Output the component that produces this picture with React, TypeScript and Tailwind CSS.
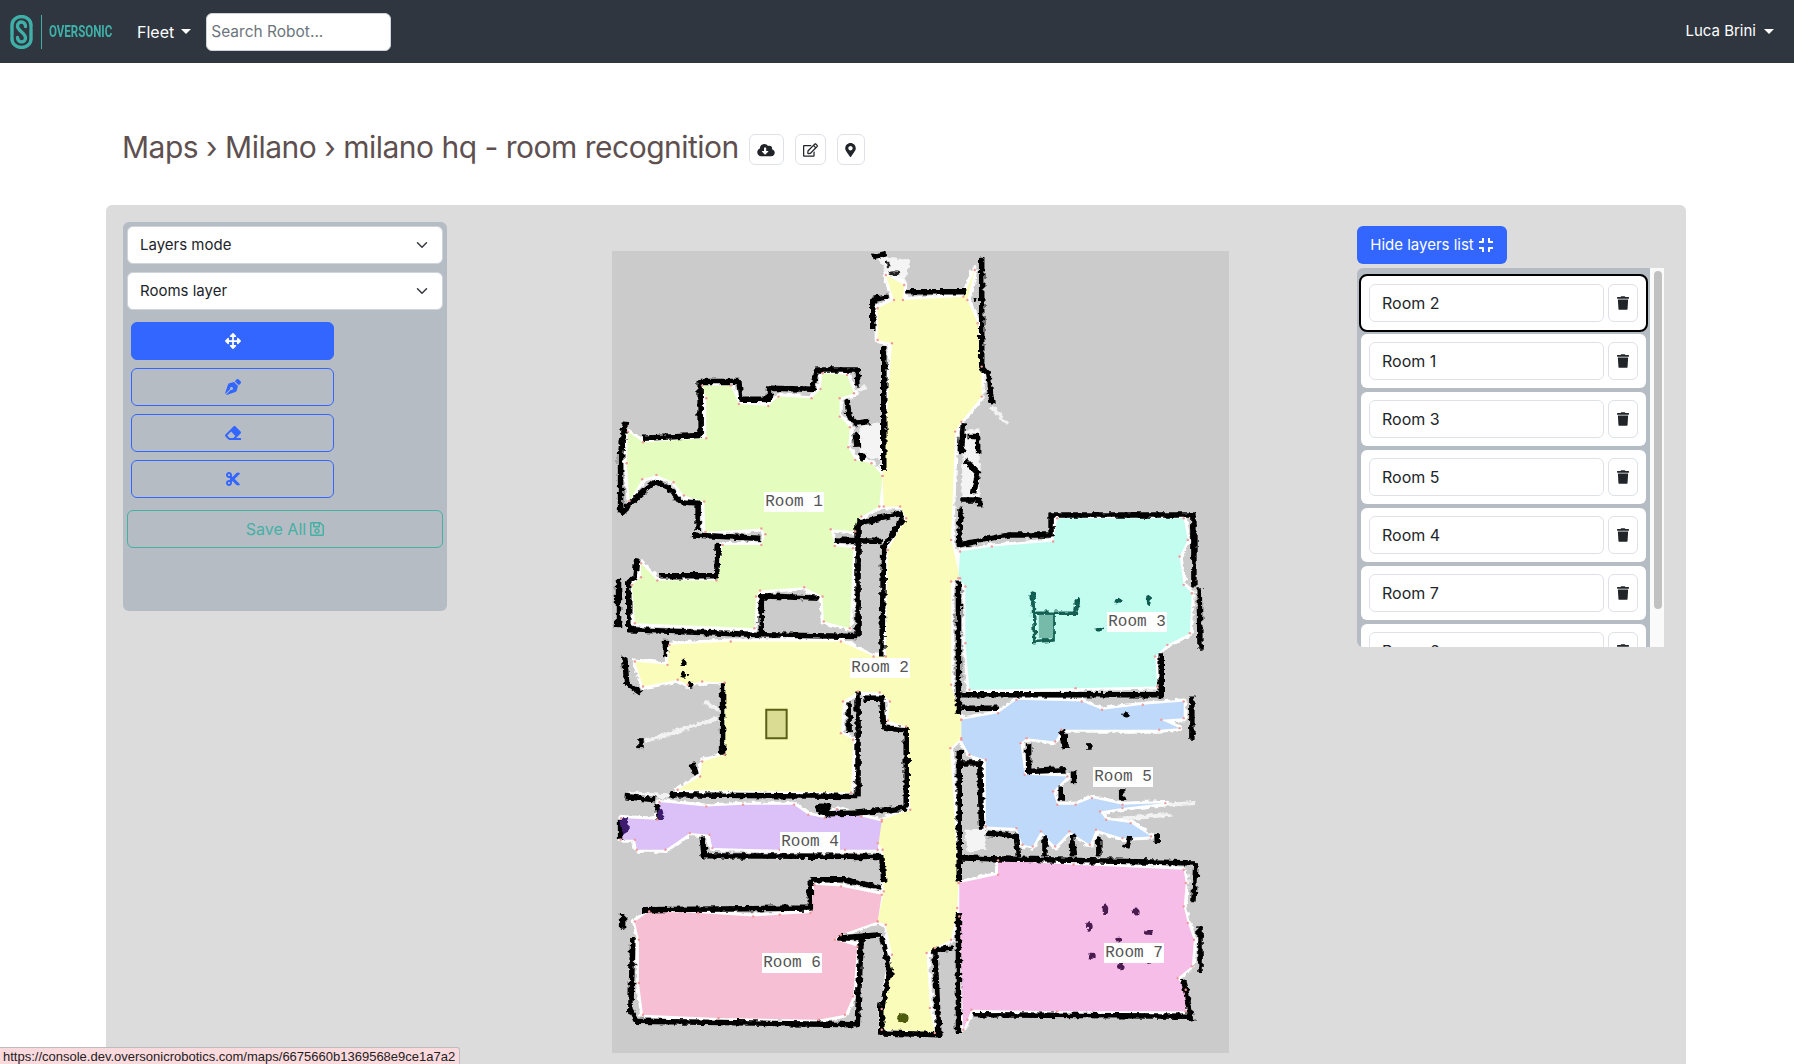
import React from "react";
import { FaArrowsAlt, FaPenNib, FaEraser, FaCut, FaRegSave, FaCompress, FaTrash, FaCloudDownloadAlt, FaRegEdit, FaMapMarkerAlt } from "react-icons/fa";

type P = [number, number][];
const rooms: { fill: string; pts: P }[] = [
  { fill: "#fafdb9", pts: [[700,105],[745,135],[742,180],[890,170],[918,90],[900,180],[925,250],[935,380],[935,470],[885,545],[870,575],[860,900],[882,1015],[860,1025],[860,1335],[885,1440],[885,1495],[858,1525],[878,1930],[875,2005],[860,2100],[820,2125],[800,2140],[808,2305],[820,2380],[690,2370],[690,2308],[715,2145],[700,2055],[680,2045],[695,1955],[692,1830],[680,1810],[690,1740],[760,1710],[750,1460],[705,1442],[710,1385],[685,1358],[632,1355],[595,1385],[590,1480],[620,1500],[615,1658],[190,1650],[245,1610],[250,1565],[305,1545],[305,1328],[250,1325],[215,1335],[190,1320],[105,1340],[85,1265],[165,1275],[170,1215],[320,1205],[590,1205],[670,1250],[700,1250],[705,930],[750,835],[735,800],[695,800],[692,708],[715,310],[680,300],[680,205],[720,180]] },
  { fill: "#e4fdbf", pts: [[68,575],[105,607],[260,595],[260,475],[250,437],[320,437],[340,492],[412,498],[437,470],[518,475],[540,447],[545,400],[605,405],[622,460],[587,475],[587,530],[612,562],[608,622],[625,660],[665,670],[692,708],[684,800],[640,830],[625,875],[565,868],[575,918],[620,925],[612,1165],[548,1145],[545,1070],[500,1042],[392,1052],[382,1070],[378,1165],[85,1150],[78,1035],[100,1012],[100,970],[140,1022],[285,1022],[300,915],[395,915],[405,883],[395,866],[258,876],[255,785],[205,767],[180,727],[138,705],[103,718],[72,783],[65,670]] },
  { fill: "#c3fdf0", pts: [[882,935],[960,920],[1110,905],[1120,835],[1430,835],[1440,900],[1420,950],[1430,1035],[1450,1060],[1445,1180],[1390,1215],[1360,1250],[1365,1340],[1165,1345],[905,1350],[895,1210],[895,1040],[878,1015]] },
  { fill: "#bfd9fb", pts: [[885,1440],[975,1420],[1020,1380],[1180,1385],[1230,1410],[1330,1395],[1430,1385],[1430,1435],[1375,1440],[1420,1465],[1370,1470],[1130,1470],[1115,1505],[1045,1495],[1030,1510],[1040,1605],[1145,1610],[1110,1655],[1120,1695],[1165,1695],[1205,1675],[1280,1695],[1385,1690],[1280,1705],[1225,1715],[1240,1740],[1300,1750],[1350,1790],[1280,1795],[1215,1770],[1200,1815],[1150,1775],[1115,1820],[1080,1775],[1060,1820],[1035,1815],[1020,1765],[945,1760],[945,1560],[905,1545],[885,1500]] },
  { fill: "#dcc0f8", pts: [[145,1687],[260,1700],[350,1695],[475,1695],[510,1725],[550,1735],[580,1708],[640,1730],[690,1745],[680,1830],[600,1830],[440,1830],[275,1825],[268,1785],[220,1780],[160,1830],[90,1830],[85,1800],[50,1800],[52,1735],[140,1740]] },
  { fill: "#f7bfd3", pts: [[85,2045],[120,2015],[240,2020],[375,2030],[440,2025],[515,2020],[525,1935],[590,1940],[690,1965],[680,2045],[590,2085],[575,2100],[630,2120],[620,2270],[600,2325],[535,2340],[290,2335],[105,2325],[95,2230],[95,2100]] },
  { fill: "#f6bde8", pts: [[880,1930],[975,1905],[975,1862],[1160,1875],[1430,1890],[1435,1930],[1430,2000],[1440,2050],[1455,2100],[1450,2180],[1415,2215],[1435,2250],[1435,2315],[1120,2315],[910,2310],[900,2340],[890,2370],[880,2030]] },
];

const walls: P[] = [
  [[668,270],[668,178],[705,172]],[[750,155],[895,155]],[[935,50],[935,380],[950,400],[960,490]],[[695,315],[695,690]],
  [[668,50],[700,40]],[[50,820],[50,640],[62,545]],[[105,595],[245,587],[245,425],[340,425],[345,478],[415,478],[415,445],[520,448],[530,390],[630,390],[632,440]],
  [[605,480],[610,530],[632,555]],[[630,585],[630,620]],[[50,820],[110,750],[135,725],[170,745],[195,785],[240,790],[240,870]],
  [[225,885],[390,895]],[[290,912],[285,1008],[145,1008]],[[90,955],[85,1015],[70,1025],[70,1170],[400,1185],[630,1190]],
  [[395,1180],[395,1068],[535,1075]],[[632,1190],[632,850],[735,820],[740,840],[695,920],[690,1250]],[[575,900],[690,905]],[[45,1020],[45,1165]],
  [[890,550],[885,640]],[[885,780],[930,780],[930,800]],[[885,800],[880,915],[1000,885],[1105,885],[1105,825],[1455,825],[1455,1040]],
  [[1468,1045],[1470,1230]],[[1375,1240],[1375,1365],[885,1365]],[[878,1025],[878,1425]],[[885,1405],[975,1405]],
  [[160,1200],[160,1250]],[[300,1330],[300,1545]],[[170,1665],[630,1670]],[[632,1355],[632,1670]],[[645,1375],[690,1375],[695,1465],[750,1470],[750,1700]],[[610,1385],[610,1480]],
  [[250,1790],[255,1848],[690,1850],[695,1930]],[[515,1920],[600,1920],[690,1945]],[[540,1715],[560,1722],[630,1720],[750,1705]],[[50,1740],[50,1800]],[[140,1690],[145,1740]],
  [[515,1920],[515,2005],[105,2010]],[[55,2020],[55,2070]],[[80,2095],[75,2310],[90,2345],[630,2355],[640,2095],[585,2095],[690,2085]],
  [[690,2090],[710,2200],[690,2300],[690,2380],[830,2385],[820,2130],[865,2125]],[[878,2020],[878,2380]],[[915,2325],[1450,2330]],
  [[1460,1870],[1455,1985]],[[1470,2060],[1470,2200]],[[1430,2220],[1450,2345]],[[885,1855],[1460,1870]],
  [[880,1530],[880,1925]],[[880,1570],[930,1570],[935,1770]],[[945,1780],[1020,1790],[1025,1850]],[[1050,1510],[1050,1595],[1140,1590]],
  [[1135,1480],[1140,1525]],[[1160,1595],[1160,1630]],[[1130,1640],[1130,1680]],[[1090,1790],[1090,1850]],[[1155,1785],[1160,1850]],[[1222,1790],[1222,1850]],[[1298,1790],[1290,1825]],
  [[1365,1780],[1365,1810]],[[1450,1370],[1450,1500]],[[1200,1510],[1200,1530]],[[1278,1645],[1278,1680]],
  [[100,1495],[100,1525]],[[225,1570],[235,1605]],[[60,1250],[65,1330],[100,1360]],[[135,1680],[60,1670]],
  [[900,590],[925,590],[925,640]],[[895,660],[925,700],[915,760]],[[625,580],[630,620]],[[660,545],[625,550]],
];

const streaks: P[] = [[[110,1505],[290,1435]],[[255,1385],[290,1410]],[[960,500],[995,550]],[[1240,1705],[1460,1690]],[[1240,1740],[1400,1725]],[[1380,2025],[1425,2015]],[[650,440],[610,470]],[[70,1660],[170,1670]]];

const whitePatches: P[] = [
  [[680,50],[760,60],[745,135],[700,105]],
  [[890,575],[930,565],[930,775],[885,775]],
  [[635,560],[690,545],[690,660],[640,650]],
  [[895,1770],[945,1765],[945,1830],[900,1835]],
  [[1300,1175],[1385,1195],[1360,1215],[1320,1210]],
];

const blobs: [number, number, number, number, string][] = [
  [1238,2010,7,16,"#4a1a50"],[1312,2015,10,12,"#4a1a50"],[1200,2060,7,16,"#4a1a50"],[1345,2078,11,7,"#4a1a50"],[1272,2098,7,7,"#4a1a50"],[1205,2150,9,11,"#4a1a50"],[1277,2182,8,10,"#4a1a50"],[1345,2168,6,5,"#4a1a50"],
  [1268,1082,7,8,"#0e5a50"],[1342,1080,5,14,"#0e5a50"],[1222,1168,8,7,"#0e5a50"],[1170,1090,8,16,"#0e5a50"],[1060,1070,8,16,"#0e5a50"],
  [742,2335,14,14,"#4d5c10"],[60,1760,10,26,"#3c1a70"],[147,1725,8,16,"#3c1a70"],
  [642,650,10,12,"#000"],[205,1268,7,9,"#000"],[205,1305,8,9,"#000"],[222,1335,7,9,"#000"],[1290,1425,8,8,"#000"],[1135,1490,9,22,"#000"],[545,1705,20,14,"#000"],[920,180,4,6,"#000"],[720,100,18,6,"#222"],[705,70,4,12,"#222"],
];

const labels = [
  { t: "Room 1", c: "left-[152px] top-[241px]" },
  { t: "Room 3", c: "left-[495px] top-[361px]" },
  { t: "Room 2", c: "left-[238px] top-[407px]" },
  { t: "Room 5", c: "left-[481px] top-[516px]" },
  { t: "Room 4", c: "left-[168px] top-[581px]" },
  { t: "Room 6", c: "left-[150px] top-[702px]" },
  { t: "Room 7", c: "left-[492px] top-[692px]" },
];

const toStr = (p: P) => p.map((q) => q.join(",")).join(" ");

function MapDrawing() {
  return (
    <svg viewBox="29 33 1512 2407" preserveAspectRatio="none" className="block w-[617px] h-[802px] blur-[0.5px]">
      <defs>
        <filter id="rough" x="-2%" y="-2%" width="104%" height="104%">
          <feTurbulence type="fractalNoise" baseFrequency="0.07" numOctaves="2" seed="4" />
          <feDisplacementMap in="SourceGraphic" scale="16" xChannelSelector="R" yChannelSelector="G" />
        </filter>
      </defs>
      <rect x="29" y="33" width="1512" height="2407" fill="#cbcbcb" />
      <g filter="url(#rough)">
        {streaks.map((s, i) => (
          <polyline key={i} points={toStr(s)} fill="none" stroke="#f2f2f2" strokeWidth="4" vectorEffect="non-scaling-stroke" />
        ))}
        {whitePatches.map((p, i) => (
          <polygon key={i} points={toStr(p)} fill="#f4f4f4" />
        ))}
        {rooms.map((r, i) => (
          <polygon key={i} points={toStr(r.pts)} fill="#ffffff" stroke="#ffffff" strokeWidth="6" vectorEffect="non-scaling-stroke" strokeLinejoin="round" />
        ))}
      </g>
      {rooms.map((r, i) => (
        <polygon key={i} points={toStr(r.pts)} fill={r.fill} />
      ))}
      <g filter="url(#rough)">
        {walls.map((w, i) => (
          <polyline key={i} points={toStr(w)} fill="none" stroke="#000000" strokeWidth="5.5" vectorEffect="non-scaling-stroke" strokeLinejoin="round" />
        ))}
        {blobs.map(([x, y, rx, ry, c], i) => (
          <ellipse key={i} cx={x} cy={y} rx={rx} ry={ry} fill={c} />
        ))}
        <polyline points="1060,1060 1065,1205 1110,1200 1110,1120 1065,1120 1165,1120 1170,1085" fill="none" stroke="#135f53" strokeWidth="3.5" vectorEffect="non-scaling-stroke" />
      </g>
      <rect x="407" y="1410" width="50" height="85" fill="#d9dc92" stroke="#5c5f17" strokeWidth="2" vectorEffect="non-scaling-stroke" />
      <rect x="1075" y="1125" width="35" height="70" fill="#76bba9" />
      {rooms.flatMap((r, i) =>
        r.pts.map((p, j) => <ellipse key={`${i}-${j}`} cx={p[0]} cy={p[1]} rx="3" ry="3.6" fill="#f09a9a" />)
      )}
    </svg>
  );
}

function Chevron() {
  return (
    <svg viewBox="0 0 16 16" className="w-3 h-3" fill="none" stroke="#343a40" strokeWidth="2" strokeLinecap="round" strokeLinejoin="round">
      <path d="M2 5l6 6 6-6" />
    </svg>
  );
}

function Caret() {
  return <span className="inline-block w-0 h-0 border-x-[5px] border-x-transparent border-t-[5px] border-t-white" />;
}

function Logo() {
  return (
    <svg viewBox="0 0 23 34" className="w-[23px] h-[34px]" fill="none" stroke="#3fb0a8" strokeWidth="3.4" strokeLinecap="round">
      <path d="M2 20V10a9.5 8.5 0 0 1 19 0v2" />
      <path d="M21 14v10a9.5 8.5 0 0 1-19 0v-2" />
      <path d="M15.5 11.5c0-6-8-6-8-.5 0 5 8 6.500 8 12 0 5.500-8 5-8-.5" />
    </svg>
  );
}

function Select({ label }: { label: string }) {
  return (
    <div className="h-[38px] bg-white border border-[#ced4da] rounded-md flex items-center justify-between pl-[12px] pr-[14px] text-[15px] text-[#212529]">
      <span className="pt-px">{label}</span>
      <Chevron />
    </div>
  );
}

function ToolButton({ active, children }: { active?: boolean; children: React.ReactNode }) {
  return (
    <div className={active ? "ml-1 w-[203px] h-[38px] rounded-md bg-[#3366ff] border border-[#3366ff] text-white flex items-center justify-center" : "ml-1 w-[203px] h-[38px] rounded-md border border-[#3366ff] text-[#3366ff] flex items-center justify-center"}>
      {children}
    </div>
  );
}

function RoomItem({ name, selected }: { name: string; selected?: boolean }) {
  return (
    <div className={selected ? "shrink-0 h-[54px] bg-white rounded-md flex items-center gap-1 px-2 outline-2 outline-black" : "shrink-0 h-[54px] bg-white rounded-md flex items-center gap-1 px-2"}>
      <div className="w-[235px] h-[38px] border border-[#dee2e6] rounded-md flex items-center pl-[12px] text-[16px] text-[#212529]">{name}</div>
      <div className="w-[30px] h-[38px] border border-[#dee2e6] rounded-md flex items-center justify-center text-[#212529]">
        <FaTrash className="w-[12px] h-[14px]" />
      </div>
    </div>
  );
}

function IconButton({ w, children }: { w: string; children: React.ReactNode }) {
  return <div className={`${w} h-[31px] border border-[#dee2e6] rounded-md flex items-center justify-center text-[#212529]`}>{children}</div>;
}

export default function App() {
  return (
    <div className="relative h-[1064px] overflow-hidden bg-white font-['Inter',sans-serif]">
      <nav className="h-[63px] bg-[#2f3640] flex items-center pl-[10px] pr-[20px]">
        <Logo />
        <div className="ml-[8px] w-px h-[34px] bg-[#3fb0a8]" />
        <div className="ml-[7px] w-[63px] whitespace-nowrap font-['Roboto',sans-serif] font-bold text-[16px] text-[#3fb0a8] origin-left scale-x-[0.72]">OVERSONIC</div>
        <div className="ml-[25px] flex items-center gap-[7px] text-white text-[16px]">
          <span>Fleet</span>
          <Caret />
        </div>
        <div className="ml-[15px] w-[185px] h-[38px] bg-white border border-[#ced4da] rounded-md flex items-center pl-[4px] text-[15.5px] text-[#6c757d]">Search Robot...</div>
        <div className="ml-auto flex items-center gap-[8px] text-white text-[15px]">
          <span>Luca Brini</span>
          <Caret />
        </div>
      </nav>

      <div className="h-[142px] pl-[122px] pt-[65px] flex items-start">
        <h1 className="text-[30px] tracking-[-0.5px] leading-[38px] text-[#5e5050] whitespace-nowrap">Maps › Milano › milano hq - room recognition</h1>
        <div className="ml-[10px] mt-[6px] flex gap-[11px]">
          <IconButton w="w-[35px]"><FaCloudDownloadAlt className="w-[18px] h-[14px]" /></IconButton>
          <IconButton w="w-[31px]"><FaRegEdit className="w-[15px] h-[14px]" /></IconButton>
          <IconButton w="w-[28px]"><FaMapMarkerAlt className="w-[11px] h-[14px]" /></IconButton>
        </div>
      </div>

      <div className="ml-[106px] w-[1580px] h-[900px] bg-[#dcdcdc] rounded-md flex items-start pl-[17px] pt-[17px]">
        <div className="w-[324px] h-[389px] bg-[#b6bcc4] rounded-md p-1 flex flex-col">
          <Select label="Layers mode" />
          <div className="mt-2"><Select label="Rooms layer" /></div>
          <div className="mt-3 flex flex-col gap-2">
            <ToolButton active><FaArrowsAlt className="w-4 h-4" /></ToolButton>
            <ToolButton><FaPenNib className="w-4 h-4" /></ToolButton>
            <ToolButton><FaEraser className="w-4 h-4" /></ToolButton>
            <ToolButton><FaCut className="w-4 h-4" /></ToolButton>
          </div>
          <div className="mt-3 h-[38px] rounded-md border border-[#45b0a4] text-[#45b0a4] text-[16px] flex items-center justify-center gap-1">
            <span>Save All</span>
            <FaRegSave className="w-[14px] h-4" />
          </div>
        </div>

        <div className="relative ml-[165px] mt-[29px] w-[617px] h-[802px] shrink-0">
          <MapDrawing />
          {labels.map((l) => (
            <span key={l.t} className={`absolute ${l.c} w-[60px] h-[20px] bg-white flex items-center justify-center font-['Liberation_Mono',monospace] text-[16px] text-[#555] whitespace-nowrap`}>{l.t}</span>
          ))}
        </div>

        <div className="ml-[128px] mt-[4px] w-[307px] flex flex-col">
          <div className="w-[150px] h-[38px] rounded-md bg-[#3366ff] text-white text-[15px] flex items-center justify-center gap-1">
            <span className="pt-px">Hide layers list</span>
            <FaCompress className="w-[16px] h-[16px]" />
          </div>
          <div className="mt-1 flex h-[379px]">
            <div className="w-[293px] overflow-hidden bg-[#b6bcc4] rounded-l-md pt-2 px-1 flex flex-col gap-1">
              <RoomItem name="Room 2" selected />
              <RoomItem name="Room 1" />
              <RoomItem name="Room 3" />
              <RoomItem name="Room 5" />
              <RoomItem name="Room 4" />
              <RoomItem name="Room 7" />
              <RoomItem name="Room 6" />
            </div>
            <div className="w-[14px] bg-[#fafafa] pt-[3px] pl-[4px]">
              <div className="w-[8px] h-[338px] rounded-full bg-[#c1c1c1]" />
            </div>
          </div>
        </div>
      </div>

      <div className="absolute left-0 bottom-0 w-[460px] h-[17px] bg-[#fbdade] border-t border-r border-[#bdbdbd] rounded-tr-[3px] pl-[3px] font-['Liberation_Sans',sans-serif] text-[13px] leading-[17px] text-[#222] whitespace-nowrap overflow-hidden">https://console.dev.oversonicrobotics.com/maps/6675660b1369568e9ce1a7a2</div>
    </div>
  );
}
